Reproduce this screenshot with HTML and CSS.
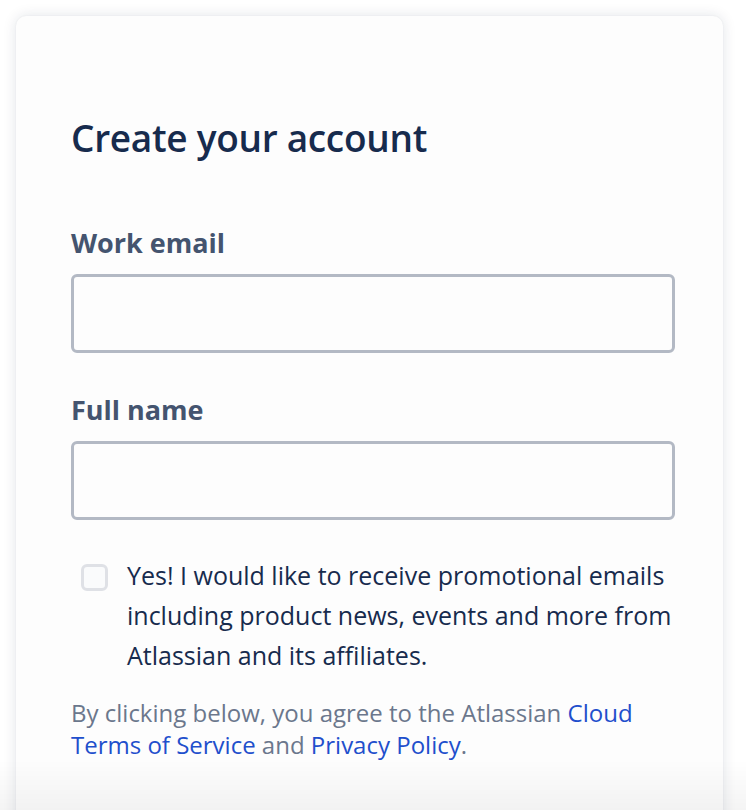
FILE: index.html
```html
<!DOCTYPE html>
<html lang="en">
<head>
<meta charset="utf-8">
<title>Create your account</title>
<link rel="stylesheet" href="styles.css">
</head>
<body>
<main class="card">
  <h1 class="title">Create your account</h1>
  <form class="form">
    <label class="field">
      <span class="label">Work email</span>
      <input class="input" type="email">
    </label>
    <label class="field field-last">
      <span class="label">Full name</span>
      <input class="input" type="text">
    </label>
    <label class="consent">
      <span class="checkbox"></span>
      <span class="consent-text">Yes! I would like to receive promotional emails including product news, events and more from Atlassian and its affiliates.</span>
    </label>
    <p class="legal">By clicking below, you agree to the Atlassian <a href="#">Cloud Terms of Service</a> and <a href="#">Privacy Policy</a>.</p>
  </form>
</main>
<div class="fade"></div>
</body>
</html>
```
FILE: styles.css
```css
* { box-sizing: border-box; }
html, body { margin: 0; padding: 0; }
body {
  background: #ffffff;
  font-family: "Open Sans", "Noto Sans", sans-serif;
  color: #172b4d;
  height: 810px;
  overflow: hidden;
}
.card {
  margin: 16px 23px 0 16px;
  background: #fdfdfd;
  border-radius: 10px;
  box-shadow: 0 0 14px rgba(9, 30, 66, 0.12), 0 0 2px rgba(9, 30, 66, 0.06);
  padding: 100px 48px 60px 55px;
  min-height: 900px;
}
.title {
  margin: 0;
  font-size: 37px;
  line-height: 44px;
  font-weight: 600;
  color: #172b4d;
  letter-spacing: -0.3px;
}
.form {
  display: flex;
  flex-direction: column;
  margin-top: 67px;
}
.field {
  display: flex;
  flex-direction: column;
  margin-bottom: 41px;
}
.field-last { margin-bottom: 35px; }
.label {
  font-size: 27px;
  line-height: 32px;
  font-weight: 700;
  color: #44546f;
  margin-bottom: 15px;
}
.input {
  height: 79px;
  border: 3px solid #b3b9c4;
  border-radius: 6px;
  background: #fdfdfd;
  font: inherit;
}
.consent {
  display: flex;
  align-items: flex-start;
  gap: 19px;
  padding-left: 10px;
}
.checkbox {
  flex: none;
  width: 27px;
  height: 27px;
  margin-top: 9px;
  border: 3px solid #dfe1e6;
  border-radius: 6px;
  background: #fafbfc;
}
.consent-text {
  font-size: 25px;
  line-height: 40px;
  color: #172b4d;
}
.legal {
  margin: 22px 0 0;
  font-size: 24px;
  line-height: 32px;
  color: #6b778c;
}
.legal a {
  color: #1f4fcc;
  text-decoration: none;
}
.fade {
  position: fixed;
  left: 0;
  right: 0;
  bottom: 0;
  height: 50px;
  background: linear-gradient(to bottom, rgba(0,0,0,0), rgba(0,0,0,0.045));
  pointer-events: none;
}
```
